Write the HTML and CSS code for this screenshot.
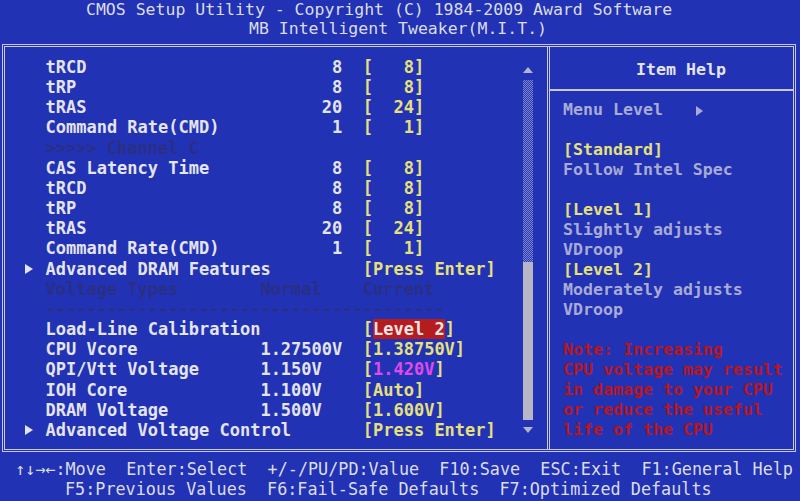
FILE: index.html
```html
<!DOCTYPE html>
<html lang="en">
<head>
    <meta charset="UTF-8">
    <meta name="viewport" content="width=device-width, initial-scale=1.0">
    <title>CMOS Setup Utility - MB Intelligent Tweaker</title>
    <link rel="stylesheet" href="styles.css">
</head>
<body>
    <div class="screen">
        <header class="top">
            <div class="line l1">CMOS Setup Utility - Copyright (C) 1984-2009 Award Software</div>
            <div class="line l2">MB Intelligent Tweaker(M.I.T.)</div>
        </header>

        <div class="frame">
            <section class="menu">
                <div class="items">
                    <div class="row"><span></span><span class="label">tRCD</span><span class="cur num">8</span><span class="set">[   8]</span></div>
                    <div class="row"><span></span><span class="label">tRP</span><span class="cur num">8</span><span class="set">[   8]</span></div>
                    <div class="row"><span></span><span class="label">tRAS</span><span class="cur num">20</span><span class="set">[  24]</span></div>
                    <div class="row"><span></span><span class="label">Command Rate(CMD)</span><span class="cur num">1</span><span class="set">[   1]</span></div>
                    <div class="row dim"><span></span><span class="label wide">&gt;&gt;&gt;&gt;&gt; Channel C</span></div>
                    <div class="row"><span></span><span class="label">CAS Latency Time</span><span class="cur num">8</span><span class="set">[   8]</span></div>
                    <div class="row"><span></span><span class="label">tRCD</span><span class="cur num">8</span><span class="set">[   8]</span></div>
                    <div class="row"><span></span><span class="label">tRP</span><span class="cur num">8</span><span class="set">[   8]</span></div>
                    <div class="row"><span></span><span class="label">tRAS</span><span class="cur num">20</span><span class="set">[  24]</span></div>
                    <div class="row"><span></span><span class="label">Command Rate(CMD)</span><span class="cur num">1</span><span class="set">[   1]</span></div>
                    <div class="row"><span class="sub"></span><span class="label wide">Advanced DRAM Features</span><span class="set">[Press Enter]</span></div>
                    <div class="row dim"><span></span><span class="label">Voltage Types</span><span class="cur">Normal</span><span class="set">Current</span></div>
                    <div class="row dim"><span></span><span class="label wide">---------------------------------------</span></div>
                    <div class="row"><span></span><span class="label wide">Load-Line Calibration</span><span class="set">[<span class="hl">Level 2</span>]</span></div>
                    <div class="row"><span></span><span class="label">CPU Vcore</span><span class="cur">1.27500V</span><span class="set">[1.38750V]</span></div>
                    <div class="row"><span></span><span class="label">QPI/Vtt Voltage</span><span class="cur">1.150V</span><span class="set">[<span class="pink">1.420V</span>]</span></div>
                    <div class="row"><span></span><span class="label">IOH Core</span><span class="cur">1.100V</span><span class="set">[Auto]</span></div>
                    <div class="row"><span></span><span class="label">DRAM Voltage</span><span class="cur">1.500V</span><span class="set">[1.600V]</span></div>
                    <div class="row"><span class="sub"></span><span class="label wide">Advanced Voltage Control</span><span class="set">[Press Enter]</span></div>
                </div>
                <div class="scroll">
                    <div class="arrow-row"><span class="tri-up"></span></div>
                    <div class="track"></div>
                    <div class="thumb"></div>
                    <div class="arrow-row"><span class="tri-down"></span></div>
                </div>
            </section>

            <aside class="help">
                <div class="help-title">Item Help</div>
                <div class="help-body">
                    <div class="grey">Menu Level<span class="tri-right"></span></div>
                    <div class="gap"></div>
                    <div class="yellow">[Standard]</div>
                    <div class="grey">Follow Intel Spec</div>
                    <div class="gap"></div>
                    <div class="yellow">[Level 1]</div>
                    <div class="grey">Slightly adjusts</div>
                    <div class="grey">VDroop</div>
                    <div class="yellow">[Level 2]</div>
                    <div class="grey">Moderately adjusts</div>
                    <div class="grey">VDroop</div>
                    <div class="gap"></div>
                    <div class="note">Note: Increasing</div>
                    <div class="note">CPU voltage may result</div>
                    <div class="note">in damage to your CPU</div>
                    <div class="note">or reduce the useful</div>
                    <div class="note">life of the CPU</div>
                </div>
            </aside>
        </div>

        <footer class="keys">
            <div class="line k1">↑↓→←:Move  Enter:Select  +/-/PU/PD:Value  F10:Save  ESC:Exit  F1:General Help</div>
            <div class="line k2">F5:Previous Values  F6:Fail-Safe Defaults  F7:Optimized Defaults</div>
        </footer>
    </div>
</body>
</html>
```

FILE: styles.css
```css
body{
    margin: 0px;
    padding: 0px;
    background-color: #2132b4;
    font-family: "DejaVu Sans Mono", "Liberation Mono", monospace;
    color: #e4e4ec;
}
.screen{
    width: 800px;
    height: 501px;
    overflow: hidden;
    display: flex;
    flex-direction: column;
}

/* title lines */
.top{
    height: 44px;
    flex: 0 0 44px;
}
.line{
    white-space: pre;
    color: #dcdce8;
}
.top .line{
    font-size: 16.5px;
    height: 19px;
    line-height: 19px;
}
.l1{
    padding-left: 86px;
}
.l2{
    padding-left: 249px;
}

/* main box */
.frame{
    box-sizing: border-box;
    margin-left: 2px;
    width: 794px;
    height: 408px;
    flex: 0 0 408px;
    border: 3px double #c8c8e4;
    display: flex;
}
.menu{
    width: 542px;
    display: flex;
}
.items{
    flex: 0 0 498px;
    padding: 10px 0 0 20px;
    font-size: 17px;
    font-weight: bold;
}
.row{
    display: grid;
    grid-template-columns: 2ch 21ch 8ch 2ch auto;
    height: 20.17px;
    line-height: 20.17px;
    white-space: pre;
}
.row > span{
    grid-row: 1;
}
.label{
    grid-column: 2;
}
.label.wide{
    grid-column: 2 / 5;
}
.cur{
    grid-column: 3;
}
.num{
    text-align: right;
}
.set{
    grid-column: 5;
    color: #e6e07c;
}
.dim, .dim .set{
    color: #2b2f84;
}
.hl{
    background-color: #b41c20;
    color: #f4e4e4;
}
.pink{
    color: #e04ae8;
}
.sub{
    grid-column: 1;
    display: flex;
    align-items: center;
}
.sub::before{
    content: "";
    border-left: 8px solid #e4e4ec;
    border-top: 5px solid transparent;
    border-bottom: 5px solid transparent;
}

/* scroll bar */
.scroll{
    flex: 0 0 10px;
    padding-top: 13px;
    display: flex;
    flex-direction: column;
}
.arrow-row{
    height: 20px;
    display: flex;
    align-items: center;
    justify-content: center;
}
.tri-up{
    border-bottom: 6px solid #b4b4c8;
    border-left: 5px solid transparent;
    border-right: 5px solid transparent;
}
.tri-down{
    border-top: 6px solid #b4b4c8;
    border-left: 5px solid transparent;
    border-right: 5px solid transparent;
}
.track{
    height: 182px;
    background: repeating-conic-gradient(#7f86cc 0 25%, #2638b4 0 50%) 0 0 / 2px 2px;
}
.thumb{
    height: 158px;
    background-color: #b6b6c6;
}

/* help panel */
.help{
    flex: 1;
    border-left: 3px double #c8c8e4;
    font-size: 16.6px;
    font-weight: bold;
}
.help-title{
    box-sizing: border-box;
    height: 44px;
    padding: 4px 0 0 86px;
    line-height: 38px;
    border-bottom: 2px solid #c8c8e4;
    color: #e4e4ec;
}
.help-body{
    padding: 9px 0 0 13px;
}
.help-body > div{
    height: 20px;
    line-height: 20px;
    white-space: pre;
}
.grey{
    color: #a9abd4;
}
.yellow{
    color: #e6e07c;
}
.note{
    color: #b8161e;
}
.tri-right{
    display: inline-block;
    margin-left: 33px;
    border-left: 7px solid #a9abd4;
    border-top: 5px solid transparent;
    border-bottom: 5px solid transparent;
    vertical-align: -1px;
}

/* key hints */
.keys{
    padding-top: 7px;
    font-size: 16.8px;
}
.keys .line{
    height: 20px;
    line-height: 20px;
}
.k1{
    padding-left: 15px;
}
.k2{
    padding-left: 65px;
}
```
